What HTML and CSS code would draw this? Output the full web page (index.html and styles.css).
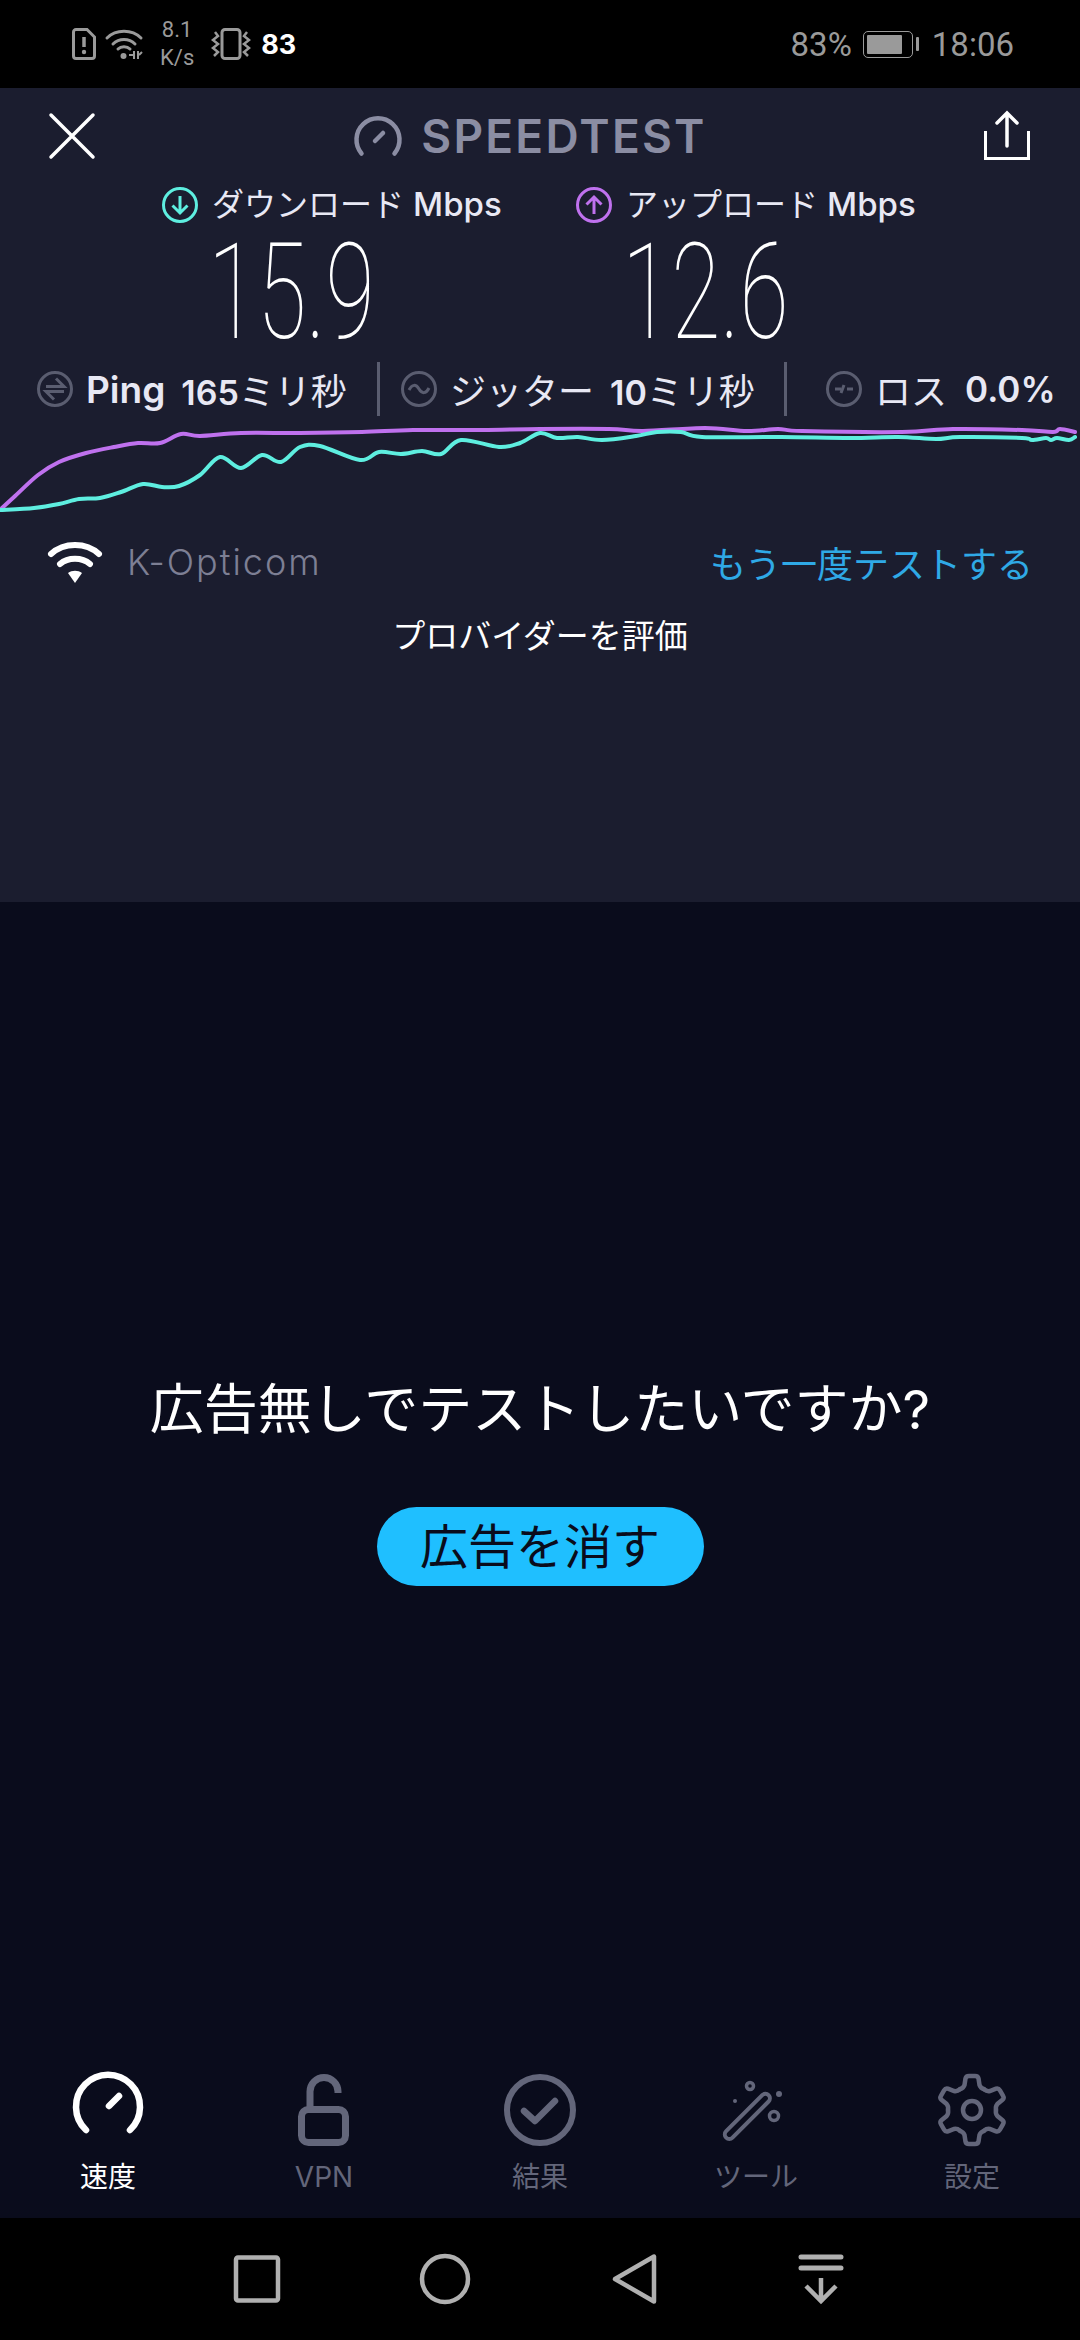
FILE: index.html
```html
<!DOCTYPE html>
<html>
    <head>
        <meta charset="UTF-8">
        <link rel="stylesheet" href="styles.css">
        <script src="chart.js"></script>
    </head>
    <body>
        <div class="phone">
            <div class="status-bar">
                <div class="status-left">
                    <svg class="icon-sim" viewBox="0 0 24 32"><path d="M4 1.500H15L22.500 9V28a2.500 2.500 0 0 1-2.500 2.500H4A2.500 2.500 0 0 1 1.500 28V4A2.500 2.500 0 0 1 4 1.500Z" fill="none" stroke="#9a9a9a" stroke-width="3"/><path d="M12 9V19" stroke="#9a9a9a" stroke-width="3.500"/><circle cx="12" cy="24" r="2.200" fill="#9a9a9a"/></svg>
                    <svg class="icon-wifi-small" viewBox="0 0 38 32"><g fill="none" stroke="#9a9a9a" stroke-width="3" stroke-linecap="round"><path d="M2 10C11 1 27 1 36 10"/><path d="M8 16C14 10 24 10 30 16"/><path d="M13 21C16 18 22 18 25 21"/></g><circle cx="18.500" cy="28" r="3" fill="#9a9a9a"/><path d="M29 23V31M28 27L24 27M33 23V31M34 27L37 24" stroke="#9a9a9a" stroke-width="2"/></svg>
                    <div class="net-speed"><span>8.1</span><span>K/s</span></div>
                    <svg class="icon-vibrate" viewBox="0 0 40 32"><rect x="11" y="1.500" width="18" height="29" rx="3" fill="none" stroke="#9a9a9a" stroke-width="3"/><path d="M4 4L7 8L2 12L7 16L2 20L7 24L3 28M36 4L33 8L38 12L33 16L38 20L33 24L37 28" fill="none" stroke="#9a9a9a" stroke-width="2.500"/></svg>
                    <span class="signal-num">83</span>
                </div>
                <div class="status-right">
                    <span>83%</span>
                    <div class="battery"><div class="battery-fill"></div></div>
                    <div class="battery-nub"></div>
                    <span class="clock">18:06</span>
                </div>
            </div>

            <div class="result-panel">
                <div class="header">
                    <svg class="icon-close" viewBox="0 0 46 46"><path d="M2 2L44 44M44 2L2 44" stroke="#fff" stroke-width="3.500" stroke-linecap="round"/></svg>
                    <div class="brand">
                        <svg class="icon-brand" viewBox="0 0 48 42"><path d="M7.500 38.500A21.500 21.500 0 1 1 40.500 38.500" fill="none" stroke="#8b8da3" stroke-width="4.500" stroke-linecap="round"/><path d="M21 26L29 18" stroke="#8b8da3" stroke-width="4.500" stroke-linecap="round"/></svg>
                        <span>SPEEDTEST</span>
                    </div>
                    <svg class="icon-share" viewBox="0 0 46 50"><path d="M1.500 20V47.500H44.500V20" fill="none" stroke="#fff" stroke-width="3"/><path d="M23 35V3M13 12L23 2L33 12" fill="none" stroke="#fff" stroke-width="3.500" stroke-linecap="round"/></svg>
                </div>

                <div class="speeds">
                    <div class="speed speed-down">
                        <div class="speed-label">
                            <svg class="icon-stat" viewBox="0 0 36 36"><circle cx="18" cy="18" r="16.500" fill="none" stroke="#5eeee0" stroke-width="3"/><path d="M18 9V26M10.500 18.500L18 26L25.500 18.500" fill="none" stroke="#5eeee0" stroke-width="3"/></svg>
                            <span>ダウンロード <b>Mbps</b></span>
                        </div>
                        <div class="speed-value">15.9</div>
                    </div>
                    <div class="speed speed-up">
                        <div class="speed-label">
                            <svg class="icon-stat" viewBox="0 0 36 36"><circle cx="18" cy="18" r="16.500" fill="none" stroke="#bf71ee" stroke-width="3"/><path d="M18 27V10M10.500 17.500L18 10L25.500 17.500" fill="none" stroke="#bf71ee" stroke-width="3"/></svg>
                            <span>アップロード <b>Mbps</b></span>
                        </div>
                        <div class="speed-value">12.6</div>
                    </div>
                </div>

                <div class="metrics">
                    <div class="metric metric-ping">
                        <svg class="icon-stat" viewBox="0 0 36 36"><circle cx="18" cy="18" r="16.500" fill="none" stroke="#5a5d70" stroke-width="3"/><path d="M9 15.500H27L19 7.500M27 20.500H9L17 28.500" fill="none" stroke="#5a5d70" stroke-width="3"/></svg>
                        <span class="ping-label">Ping</span>
                        <span class="metric-value"><b>165</b>ミリ秒</span>
                    </div>
                    <div class="metric-divider"></div>
                    <div class="metric metric-jitter">
                        <svg class="icon-stat" viewBox="0 0 36 36"><circle cx="18" cy="18" r="16.500" fill="none" stroke="#5a5d70" stroke-width="3"/><path d="M8 19C11 13 15 13 18 18C21 23 25 23 28 17" fill="none" stroke="#5a5d70" stroke-width="3"/></svg>
                        <span>ジッター</span>
                        <span class="metric-value"><b>10</b>ミリ秒</span>
                    </div>
                    <div class="metric-divider"></div>
                    <div class="metric metric-loss">
                        <svg class="icon-stat" viewBox="0 0 36 36"><circle cx="18" cy="18" r="16.500" fill="none" stroke="#5a5d70" stroke-width="3"/><path d="M9 18H15M21 18H27M15 22L18 14" fill="none" stroke="#5a5d70" stroke-width="3"/></svg>
                        <span>ロス</span>
                        <span class="metric-value loss-value"><b>0.0%</b></span>
                    </div>
                </div>

                <svg class="chart" viewBox="0 425 1080 90">
                    <path class="line-up" data-points="2,508 14,497 38,475 59,462 86,453 114,447 138,443 160,443 181,434 200,436 241,433 300,433 362,432 413,430 482,430 540,429 609,429 643,431 705,428 747,431 778,429 802,431 902,432 953,429 1022,430 1053,432 1060,429 1075,432"/>
                    <path class="line-down" data-points="0,510 34,508 59,504 79,499 100,498 121,492 143,484 162,487 179,486 200,475 220,457 241,468 262,455 281,462 300,447 320,446 360,460 379,452 401,454 422,451 441,454 461,440 499,447 520,443 540,433 557,438 578,437 602,440 636,436 657,432 681,432 702,437 781,437 850,438 898,437 936,439 960,437 1022,438 1032,440 1046,438 1051,440 1057,438 1069,440 1075,437"/>
                </svg>

                <div class="provider-row">
                    <div class="provider">
                        <svg class="icon-wifi" viewBox="0 0 54 44"><g fill="none" stroke="#fff" stroke-width="6" stroke-linecap="round"><path d="M3 14C16 2 38 2 51 14"/><path d="M12 24C20 17 34 17 42 24"/></g><path d="M20 33C24 30 30 30 34 33L27 43Z" fill="#fff"/></svg>
                        <span>K-Opticom</span>
                    </div>
                    <span class="retest">もう一度テストする</span>
                </div>
                <div class="rate">プロバイダーを評価</div>
            </div>

            <div class="ad-area">
                <div class="ad">
                    <div class="ad-title">広告無しでテストしたいですか?</div>
                    <div class="ad-button">広告を消す</div>
                </div>
                <div class="tabs">
                    <div class="tab active">
                        <svg viewBox="0 0 72 72"><path d="M14 56A32 32 0 1 1 58 56" fill="none" stroke="#fff" stroke-width="6.500" stroke-linecap="round"/><path d="M37 32L47 22" stroke="#fff" stroke-width="6.500" stroke-linecap="round"/></svg>
                        <span>速度</span>
                    </div>
                    <div class="tab">
                        <svg viewBox="0 0 72 72"><path d="M22 33V17.500A14 14 0 0 1 50 17.500V19" fill="none" stroke="#63667a" stroke-width="7"/><rect x="13.500" y="35.500" width="44" height="33" rx="7" fill="none" stroke="#63667a" stroke-width="7"/></svg>
                        <span>VPN</span>
                    </div>
                    <div class="tab">
                        <svg viewBox="0 0 72 72"><circle cx="36" cy="36" r="33" fill="none" stroke="#63667a" stroke-width="6"/><path d="M20 37L31 47L51 27" fill="none" stroke="#63667a" stroke-width="6.500" stroke-linecap="round" stroke-linejoin="round"/></svg>
                        <span>結果</span>
                    </div>
                    <div class="tab">
                        <svg viewBox="0 0 72 72"><rect x="-4" y="-30" width="9" height="60" rx="4.500" fill="none" stroke="#63667a" stroke-width="4" transform="translate(27 42) rotate(45)"/><g fill="none" stroke="#63667a" stroke-width="3.500"><circle cx="30" cy="12" r="3.500"/><circle cx="54" cy="42" r="4.500"/></g><circle cx="15" cy="27" r="2" fill="#63667a"/><circle cx="59" cy="20" r="3" fill="#63667a"/></svg>
                        <span>ツール</span>
                    </div>
                    <div class="tab">
                        <svg viewBox="0 0 72 72">
                            <defs><path id="gear-tooth" d="M24 15.200Q27.500 14 28.500 11L29.500 4.500Q30 2 33 2H39Q42 2 42.500 4.500L43.500 11Q44.500 14 48 15.200" fill="none" stroke="#63667a" stroke-width="4.500" stroke-linecap="round"/></defs>
                            <use href="#gear-tooth"/>
                            <use href="#gear-tooth" transform="rotate(60 36 36)"/>
                            <use href="#gear-tooth" transform="rotate(120 36 36)"/>
                            <use href="#gear-tooth" transform="rotate(180 36 36)"/>
                            <use href="#gear-tooth" transform="rotate(240 36 36)"/>
                            <use href="#gear-tooth" transform="rotate(300 36 36)"/>
                            <circle cx="36" cy="36" r="9" fill="none" stroke="#63667a" stroke-width="4.500"/>
                        </svg>
                        <span>設定</span>
                    </div>
                </div>
            </div>

            <div class="nav-bar">
                <svg viewBox="0 0 50 50"><rect x="4" y="3.500" width="42" height="43" rx="2" fill="none" stroke="#b0b0b0" stroke-width="4.500"/></svg>
                <svg viewBox="0 0 50 50"><circle cx="25" cy="25" r="23" fill="none" stroke="#b0b0b0" stroke-width="4.500"/></svg>
                <svg viewBox="0 0 50 50"><path d="M46 2.500V47.500L7 25Z" fill="none" stroke="#b0b0b0" stroke-width="4.500" stroke-linejoin="round"/></svg>
                <svg viewBox="0 0 50 50"><path d="M5 3H45M5 14H45" stroke="#b0b0b0" stroke-width="5" stroke-linecap="round"/><path d="M25 24V47M10 32L25 47L40 32" fill="none" stroke="#b0b0b0" stroke-width="4.500"/></svg>
            </div>
        </div>
    </body>
</html>
```
FILE: styles.css
```css
html, body {
    margin: 0;
    padding: 0;
    background-color: black;
}

body {
    font-family: 'Inter', 'Noto Sans CJK JP', sans-serif;
    color: white;
}

.phone {
    display: flex;
    flex-direction: column;
    width: 1080px;
    height: 2340px;
    overflow: hidden;
}

svg {
    display: block;
    flex: none;
    overflow: visible;
}

/* status bar */
.status-bar {
    display: flex;
    justify-content: space-between;
    align-items: center;
    height: 88px;
    padding: 0 66px 0 72px;
    background-color: black;
    color: #9a9a9a;
    font-family: 'Roboto', sans-serif;
}

.status-left, .status-right {
    display: flex;
    align-items: center;
}

.icon-sim {
    width: 24px;
    height: 32px;
}

.icon-wifi-small {
    width: 38px;
    height: 32px;
    margin-left: 9px;
}

.net-speed {
    display: flex;
    flex-direction: column;
    margin-left: 17px;
    font-size: 22px;
    line-height: 28px;
    text-align: center;
}

.icon-vibrate {
    width: 40px;
    height: 32px;
    margin-left: 17px;
}

.signal-num {
    margin-left: 10px;
    font-family: 'Inter', sans-serif;
    font-size: 27px;
    font-weight: 700;
    color: white;
}

.status-right {
    font-size: 33px;
}

.battery {
    width: 50px;
    height: 27px;
    margin-left: 11px;
    padding: 3px;
    box-sizing: border-box;
    border: 1.5px solid #9a9a9a;
    border-radius: 5px;
}

.battery-fill {
    width: 83%;
    height: 100%;
    background-color: #9a9a9a;
    border-radius: 1px;
}

.battery-nub {
    width: 3px;
    height: 14px;
    margin-left: 3px;
    background-color: #9a9a9a;
    border-radius: 1px;
}

.clock {
    margin-left: 13px;
}

/* result panel */
.result-panel {
    height: 814px;
    background-color: #1b1d2f;
}

.header {
    display: flex;
    justify-content: space-between;
    align-items: center;
    height: 72px;
    padding: 12px 50px 14px 49px;
}

.icon-close {
    width: 46px;
    height: 46px;
}

.brand {
    display: flex;
    align-items: center;
    gap: 19px;
    margin-left: -18px;
    color: #8b8da3;
    font-size: 46px;
    font-weight: 600;
    letter-spacing: 2.2px;
}

.icon-brand {
    width: 48px;
    height: 42px;
}

.icon-share {
    width: 46px;
    height: 50px;
}

.speeds {
    display: flex;
    padding: 0 0 0 162px;
}

.speed-down {
    width: 414px;
}

.speed-label {
    display: flex;
    align-items: center;
    gap: 14px;
    font-size: 32px;
    line-height: 36px;
    color: #e8e8f4;
}

.speed-label b {
    font-size: 33px;
    font-weight: 500;
}

.icon-stat {
    width: 36px;
    height: 36px;
}

.speed-value {
    margin-left: 46px;
    font-family: 'Roboto', sans-serif;
    font-size: 134px;
    font-weight: 100;
    line-height: 138px;
    padding-top: 1px;
    transform: scaleX(0.67);
    transform-origin: left center;
}

.metrics {
    display: flex;
    align-items: center;
    height: 54px;
    padding-left: 37px;
    font-size: 36px;
    color: #e8e8f4;
}

.metrics b {
    font-size: 34px;
    font-weight: 600;
}

.metrics .loss-value b {
    font-size: 35px;
}

.metric {
    display: flex;
    align-items: center;
    gap: 13px;
}

.metric-value {
    margin-left: 3px;
}

.loss-value {
    margin-left: 5px;
}

.ping-label {
    font-size: 37px;
    font-weight: 600;
}

.metric-ping {
    width: 340px;
}

.metric-jitter {
    width: 383px;
    margin-left: 21px;
}

.metric-loss {
    margin-left: 39px;
}

.metric-divider {
    width: 3px;
    height: 54px;
    background-color: #5a5d70;
}

.chart {
    width: 1080px;
    height: 90px;
    margin-top: 9px;
}

.chart path {
    fill: none;
    stroke-width: 4;
    stroke-linejoin: round;
    stroke-linecap: round;
}

.line-up {
    stroke: #bf71ee;
}

.line-down {
    stroke: #5eeee0;
}

.provider-row {
    display: flex;
    justify-content: space-between;
    align-items: center;
    height: 44px;
    margin-top: 25px;
    padding: 0 47px 0 48px;
}

.provider {
    display: flex;
    align-items: center;
    gap: 25px;
    color: #7d7f94;
    font-size: 36px;
    font-weight: 300;
    letter-spacing: 2px;
}

.icon-wifi {
    width: 54px;
    height: 44px;
}

.retest {
    color: #2fa9e6;
    font-size: 36px;
}

.rate {
    margin-top: 26px;
    font-size: 33px;
    text-align: center;
}

/* ad area */
.ad-area {
    display: flex;
    flex-direction: column;
    flex: 1;
    background-color: #0a0c1c;
}

.ad {
    display: flex;
    flex-direction: column;
    align-items: center;
    justify-content: center;
    gap: 66px;
    flex: 1;
}

.ad-title {
    font-size: 54px;
    line-height: 62px;
}

.ad-button {
    width: 327px;
    height: 79px;
    border-radius: 40px;
    background-color: #1fbfff;
    color: #0a0c1c;
    font-size: 48px;
    line-height: 79px;
    text-align: center;
}

.tabs {
    display: flex;
    height: 156px;
}

.tab {
    display: flex;
    flex-direction: column;
    align-items: center;
    flex: 1;
    color: #63667a;
    font-size: 28px;
    line-height: 36px;
}

.tab svg {
    width: 72px;
    height: 72px;
    margin-top: 12px;
}

.tab span {
    margin-top: 13px;
}

.tab.active {
    color: white;
}

.nav-bar {
    display: flex;
    justify-content: center;
    align-items: center;
    gap: 138px;
    height: 122px;
    padding-right: 3px;
    background-color: black;
}

.nav-bar svg {
    width: 50px;
    height: 50px;
}
```
FILE: chart.js
```js
document.addEventListener('DOMContentLoaded', function () {
    // smooth line that still goes through every sampled point
    document.querySelectorAll('.chart path').forEach((line) => {
        const pts = line.dataset.points.split(' ').map((p) => p.split(',').map(Number));
        let d = `M${pts[0][0]} ${pts[0][1]}`;
        for (let i = 0; i < pts.length - 1; i++) {
            const p0 = pts[Math.max(i - 1, 0)];
            const p1 = pts[i];
            const p2 = pts[i + 1];
            const p3 = pts[Math.min(i + 2, pts.length - 1)];
            const c1x = p1[0] + (p2[0] - p0[0]) / 6;
            const c1y = p1[1] + (p2[1] - p0[1]) / 6;
            const c2x = p2[0] - (p3[0] - p1[0]) / 6;
            const c2y = p2[1] - (p3[1] - p1[1]) / 6;
            d += `C${c1x} ${c1y} ${c2x} ${c2y} ${p2[0]} ${p2[1]}`;
        }
        line.setAttribute('d', d);
    });
});
```
